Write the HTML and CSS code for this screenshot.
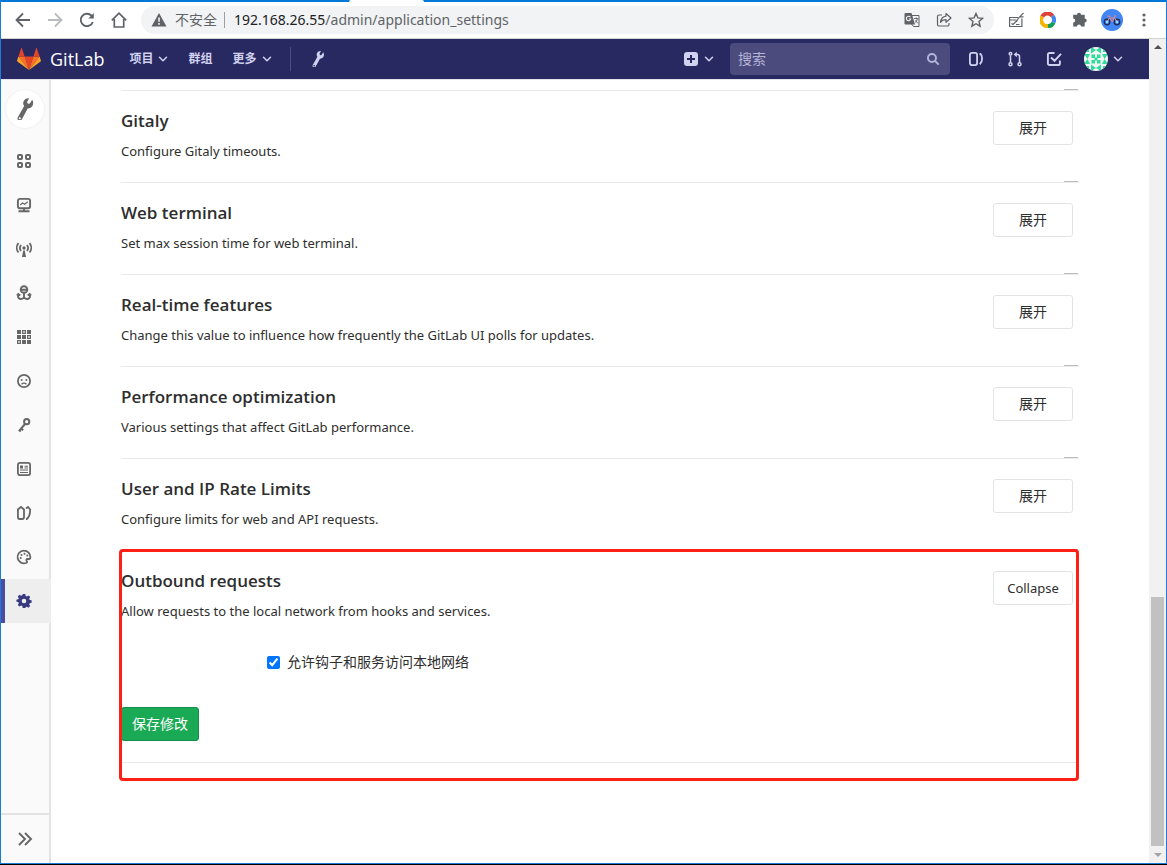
FILE: index.html
```html
<!DOCTYPE html>
<html lang="zh-CN">
<head>
<meta charset="utf-8">
<title>Settings · GitLab</title>
<link rel="stylesheet" href="styles.css">
</head>
<body>
<svg class="sprite" aria-hidden="true">
  <symbol id="chevron" viewBox="0 0 10 10"><path d="M1.500 3.200 5 6.700l3.500-3.500" fill="none" stroke="currentColor" stroke-width="1.500" stroke-linecap="round" stroke-linejoin="round"/></symbol>
  <symbol id="wrench" viewBox="0 0 16 16"><path transform="rotate(-13 8 8)" fill="currentColor" d="M14.600 2.600 12.300 4.900 10.900 4.700 10.600 3.300 12.700 1C10.700.3 8.700 1.100 7.900 2.900c-.4 1-.4 1.900 0 2.800L1.600 12.600a1.650 1.650 0 0 0 2.400 2.300L10 8.100c1.200.3 2.500.1 3.500-.8 1.400-1.300 1.700-3.100 1.100-4.700ZM2.800 14.500a.75.75 0 1 1 0-1.500.75.75 0 0 1 0 1.500Z"/></symbol>
</svg>
<div class="window">
  <div class="tabstrip"><div class="active-tab"></div></div>
  <div class="toolbar">
    <button class="tool" aria-label="后退"><svg viewBox="0 0 16 16" fill="none" stroke="currentColor" stroke-width="1.800"><path d="M15 8H2M8 1.500 1.500 8 8 14.500"/></svg></button>
    <button class="tool disabled" aria-label="前进"><svg viewBox="0 0 16 16" fill="none" stroke="currentColor" stroke-width="1.800"><path d="M1 8h13M8 1.500 14.500 8 8 14.500"/></svg></button>
    <button class="tool" aria-label="重新加载"><svg viewBox="0 0 16 16" fill="none" stroke="currentColor" stroke-width="1.900"><path d="M13.800 10A6.200 6.200 0 1 1 12.500 3.700L13.500 5"/><path d="M14.800 1v5.500H9.300Z" fill="currentColor" stroke="none"/></svg></button>
    <button class="tool" aria-label="主页"><svg viewBox="0 0 16 16" fill="none" stroke="currentColor" stroke-width="1.700"><path d="M.8 8.300 8 1.200l7.200 7.100M3.300 7v8h9.400V7"/></svg></button>
    <div class="omnibox">
      <svg class="warn" viewBox="0 0 16 16"><path fill="currentColor" d="M8 1 15.500 14.500H.5Z"/><path d="M8 5.500v4.300M8 11v1.800" stroke="#f1f3f4" stroke-width="1.600"/></svg>
      <span class="insecure">不安全</span>
      <span class="url"><b>192.168.26.55</b>/admin/application_settings</span>
      <button class="tool" aria-label="翻译"><svg viewBox="0 0 16 16"><path d="M7 3.500h8v11H9.500L7.500 12" fill="none" stroke="currentColor" stroke-width="1"/><path fill="currentColor" d="M1.500 1h6L11 12.500H1.500A1 1 0 0 1 .5 11.500V2a1 1 0 0 1 1-1Z"/><path d="M6.400 5.300A2.200 2.200 0 1 0 6.700 7H4.800" fill="none" stroke="#f1f3f4" stroke-width="1.100"/><path d="M10 6.500h4.300M12.300 5.500v1M13.500 6.800c-.4 1.700-1.300 2.900-2.600 3.700M11.500 8.300l2.300 3" fill="none" stroke="currentColor" stroke-width=".9"/></svg></button>
      <button class="tool" aria-label="分享"><svg viewBox="0 0 16 16" fill="none" stroke="currentColor" stroke-width="1.200" stroke-linejoin="round"><path d="M6 3H3a1.500 1.500 0 0 0-1.500 1.500v8A1.500 1.500 0 0 0 3 14h8.500a1.500 1.500 0 0 0 1.500-1.500V11"/><path d="M10 1.500 15 6l-5 4.300V7.700c-2.600 0-4.300.8-5.500 2.600.4-3.400 2.200-5.700 5.500-6.200Z"/></svg></button>
      <button class="tool" aria-label="收藏"><svg viewBox="0 0 16 16" fill="none" stroke="currentColor" stroke-width="1.400"><path d="m8 1.500 1.900 4.400 4.800.4L11 9.500l1.100 4.700L8 11.700l-4.100 2.500L5 9.500 1.300 6.300l4.800-.4Z"/></svg></button>
    </div>
    <div class="extensions">
      <button class="tool" aria-label="笔记"><svg viewBox="0 0 16 16" fill="none" stroke="currentColor" stroke-width="1.200"><path d="M10 5.500H1.600v9h12.300V6.500M1.500 8h7M3.500 11.500l1.500 1 3-3M8 12.500h3.500M15.500.8 10.500 6l-2.300 4M11.500 4.800h4"/></svg></button>
      <button class="tool" aria-label="浏览扩展"><svg viewBox="0 0 16 16" fill="none" stroke-width="4"><path d="M2.200 4.700A6 6 0 0 1 12.500 4" stroke="#db4437"/><path d="M12.500 4A6 6 0 0 1 13.500 10.500" stroke="#4285f4"/><path d="M13.500 10.500A6 6 0 0 1 7 14" stroke="#0f9d58"/><path d="M8 14A6 6 0 0 1 2.200 4.700" stroke="#f4b400"/></svg></button>
      <button class="tool" aria-label="扩展程序"><svg viewBox="0 0 16 16"><path fill="currentColor" d="M5 2.800a2 2 0 0 1 4 0h3.700v3.700a2 2 0 0 1 0 4v4H9a2 2 0 0 0-4 0H1.200v-3.900a2 2 0 0 0 0-4V2.800Z"/></svg></button>
      <button class="tool profile" aria-label="个人资料"><svg viewBox="0 0 22 22"><circle cx="11" cy="11" r="11" fill="#4285f4"/><g fill="none" stroke="#202a50" stroke-width="1.300"><circle cx="6" cy="13" r="2.800"/><circle cx="16" cy="13" r="2.800"/></g><path d="M6 13 8.500 9h5L16 13M8.500 9l3 4 2-5.500M13 7h2" fill="none" stroke="#e58a84" stroke-width="1"/><path d="M6.500 7.200h3" stroke="#e58a84" stroke-width="1.200"/><g fill="#9ed7ff"><circle cx="6" cy="13" r="1.200"/><circle cx="16" cy="13" r="1.200"/></g></svg></button>
      <button class="tool" aria-label="菜单"><svg viewBox="0 0 16 16" fill="currentColor"><circle cx="8" cy="3" r="1.600"/><circle cx="8" cy="8" r="1.600"/><circle cx="8" cy="13" r="1.600"/></svg></button>
    </div>
  </div>

  <div class="viewport">
    <div class="page">
      <header class="navbar">
        <a class="brand" href="#">
          <svg viewBox="0 0 24 22"><path fill="#e24329" d="m12 22 4.400-13.500H7.600Z"/><path fill="#fc6d26" d="M12 22 7.600 8.500H1.400ZM12 22l4.400-13.500h6.200Z"/><path fill="#fca326" d="M1.400 8.500.1 12.600c-.1.400 0 .8.300 1L12 22ZM22.600 8.500l1.300 4.100c.1.400 0 .8-.3 1L12 22Z"/><path fill="#e24329" d="M1.400 8.500h6.200L5 .4c-.1-.4-.7-.4-.9 0ZM22.600 8.500h-6.200L19 .4c.1-.4.7-.4.9 0Z"/></svg>
          <span>GitLab</span>
        </a>
        <nav class="menu">
          <a href="#">项目<svg class="chev"><use href="#chevron"/></svg></a>
          <a href="#">群组</a>
          <a href="#">更多<svg class="chev"><use href="#chevron"/></svg></a>
          <a class="admin" href="#" aria-label="管理"><svg class="ico"><use href="#wrench"/></svg></a>
        </nav>
        <a class="pair" href="#" aria-label="新建"><svg class="ico" viewBox="0 0 16 16"><path fill="currentColor" fill-rule="evenodd" d="M4 1h8a3 3 0 0 1 3 3v8a3 3 0 0 1-3 3H4a3 3 0 0 1-3-3V4a3 3 0 0 1 3-3Zm3 3v3H4v2h3v3h2V9h3V7H9V4Z"/></svg><svg class="chev"><use href="#chevron"/></svg></a>
        <form class="search">
          <input type="text" placeholder="搜索" aria-label="搜索">
          <svg viewBox="0 0 16 16" fill="none" stroke="currentColor" stroke-width="2.200"><circle cx="6.800" cy="6.800" r="4.600"/><path d="m10.200 10.200 4.300 4.300"/></svg>
        </form>
        <nav class="shortcuts">
          <a href="#" aria-label="议题"><svg class="ico" viewBox="0 0 16 16" fill="none" stroke="currentColor" stroke-width="1.800"><rect x="1.900" y="1.900" width="7.200" height="12.200" rx="2"/><path d="M11.500 3h1c1 .8 1.600 2 1.600 4.500s-.8 4.500-2.300 5.800"/></svg></a>
          <a href="#" aria-label="合并请求"><svg class="ico" viewBox="0 0 16 16" fill="none" stroke="currentColor" stroke-width="1.500"><circle cx="3.500" cy="2.800" r="1.300"/><circle cx="3.500" cy="13.300" r="1.500"/><circle cx="12.500" cy="13.300" r="1.500"/><path d="M3.500 4.500v7M12.500 11.500V5.500c0-1.300-.8-2-2-2H8"/><path d="M9.800.8v5.400L6.600 3.500Z" fill="currentColor" stroke="none"/></svg></a>
          <a href="#" aria-label="待办事项"><svg class="ico" viewBox="0 0 16 16" fill="none" stroke="currentColor" stroke-width="1.900"><path d="M8.500 2H3.500A1.600 1.600 0 0 0 1.900 3.600v8.800A1.600 1.600 0 0 0 3.500 14h8.800a1.600 1.600 0 0 0 1.600-1.600V9.500M5 6.500l3.500 3.300 6.500-7"/></svg></a>
        </nav>
        <a class="pair user" href="#" aria-label="用户"><svg class="avatar" viewBox="0 0 24 24"><defs><clipPath id="round"><circle cx="12" cy="12" r="12"/></clipPath></defs><g clip-path="url(#round)"><path fill="#f3f5f4" d="M0 0h24v24H0z"/><path fill="#2ddb9c" d="M7.500 7.500h3.500v3.500H7.500zM13 7.500h3.500v3.500H13zM7.500 13h3.500v3.500H7.500zM13 13h3.500v3.500H13zM10.500 10.500h3v3h-3zM7 0l5 3-5 3.500zM17 0l-5 3 5 3.500zM7 17.500l5 3.500-5 3zM17 17.500l-5 3.500 5 3zM0 7l3.500 5L6 7zM0 17l3.500-5L6 17zM24 7l-3.500 5L18 7zM24 17l-3.500-5L18 17zM2 2h3v3H2zM19 2h3v3h-3zM2 19h3v3H2zM19 19h3v3h-3z"/></g></svg><svg class="chev"><use href="#chevron"/></svg></a>
      </header>

      <div class="body">
        <aside class="sidebar">
          <a class="context" href="#" aria-label="管理区域"><svg viewBox="0 0 16 16"><use href="#wrench"/></svg></a>
          <nav class="side-nav">
            <a href="#" aria-label="概览"><svg viewBox="0 0 16 16" fill="none" stroke="currentColor" stroke-width="2"><rect x="2" y="2" width="4" height="4" rx="1"/><rect x="10" y="2" width="4" height="4" rx="1"/><rect x="2" y="10" width="4" height="4" rx="1"/><rect x="10" y="10" width="4" height="4" rx="1"/></svg></a>
            <a href="#" aria-label="监控"><svg viewBox="0 0 16 16" fill="none" stroke="currentColor" stroke-width="1.900"><rect x="1.900" y="1.900" width="12.200" height="9.400" rx="2"/><path d="M2.500 14.200h11M8 11v3"/><path d="m4.300 8 2.200-2 2.200 1.300 3-2.500" stroke-width="1.200"/></svg></a>
            <a href="#" aria-label="消息"><svg viewBox="0 0 16 16" fill="none" stroke="currentColor" stroke-width="1.800"><path d="M2.500 2.200c-2.300 2.700-2.300 6.600 0 9.300M13.500 2.200c2.300 2.700 2.300 6.600 0 9.300M5.100 4c-1.400 1.700-1.400 4.300 0 6M10.900 4c1.400 1.700 1.400 4.300 0 6"/><circle cx="8" cy="7" r="1.700" fill="currentColor" stroke="none"/><path d="M7.200 9.500h1.600L10 16H6Z" fill="currentColor" stroke="none"/></svg></a>
            <a href="#" aria-label="系统钩子"><svg viewBox="0 0 16 16" fill="none" stroke="currentColor" stroke-width="1.900"><circle cx="8" cy="4.500" r="3.300"/><path d="M5 4.700h6M8 8v5M2 9v2.300A2.800 2.800 0 0 0 5 14c1.500 0 2.600-.8 3-2 .4 1.200 1.500 2 3 2a2.800 2.800 0 0 0 3-2.700V9M1 10.700 2.300 9l2 1.500M15 10.700 13.700 9l-2 1.500"/></svg></a>
            <a href="#" aria-label="应用"><svg viewBox="0 0 16 16" fill="currentColor"><path fill-rule="evenodd" d="M1 1h4v4H1zM6 1h4v4H6zm1.200 1.200v1.600h1.600V2.200zM11 1h4v4h-4zM1 6h4v4H1zM6 6h4v4H6zM11 6h4v4h-4zm1.200 1.200v1.600h1.600V7.200zM1 11h4v4H1zm1.200 1.200v1.600h1.600v-1.600zM6 11h4v4H6zM11 11h4v4h-4z"/></svg></a>
            <a href="#" aria-label="滥用报告"><svg viewBox="0 0 16 16" fill="none" stroke="currentColor" stroke-width="1.800"><circle cx="8" cy="8" r="6.100"/><path d="M5.500 11.200c1.300-1.500 3.700-1.500 5 0" stroke-width="1.300"/><g fill="currentColor" stroke="none"><circle cx="5.600" cy="7" r="1"/><circle cx="10.400" cy="7" r="1"/></g></svg></a>
            <a href="#" aria-label="部署密钥"><svg viewBox="0 0 16 16" fill="none" stroke="currentColor" stroke-width="2"><circle cx="10.700" cy="4.700" r="2.600"/><path d="m9 7-6 7.200M5 11.300l2.200 2M2.800 12.800l2 1.800"/></svg></a>
            <a href="#" aria-label="许可证"><svg viewBox="0 0 16 16" fill="none" stroke="currentColor" stroke-width="1.800"><rect x="1.900" y="1.900" width="12.200" height="12.200" rx="2"/><path d="M8.500 5.200H12M8.500 7H12M4 9h8M4 11.500h8" stroke-width="1.100"/><path d="M4 4.500h3v3H4z" fill="currentColor" stroke="none"/></svg></a>
            <a href="#" aria-label="标签"><svg viewBox="0 0 16 16" fill="none" stroke="currentColor" stroke-width="1.800"><path d="M1.900 4.500 5 2l3 2.500V12c0 1.300-.6 2-1.800 2H3.700c-1.200 0-1.800-.7-1.800-2ZM10 3.500 12 2l2.200 2.500c0 4-.4 7-3.400 9.500H10"/></svg></a>
            <a href="#" aria-label="外观"><svg viewBox="0 0 16 16" fill="none" stroke="currentColor" stroke-width="1.800"><path d="M8 1.700a6.300 6.300 0 1 0 2.500 12c.8-.4.700-1.100.2-1.700-.8-.9-.3-2.100.9-2h1.600c.7 0 1.200-.6 1.200-1.700A6.400 6.400 0 0 0 8 1.700Z"/><g fill="currentColor" stroke="none"><circle cx="8.500" cy="4.800" r="1"/><circle cx="5.500" cy="6" r="1"/><circle cx="4.700" cy="9" r="1"/><circle cx="11.300" cy="6.500" r="1"/></g></svg></a>
            <a class="active" href="#" aria-label="设置"><svg viewBox="0 0 16 16" fill="currentColor"><path fill-rule="evenodd" d="M6.700 1h2.600l.4 1.900 1.200.5 1.700-1 1.600 1.700-1 1.700.5 1.100 1.900.4v2.500l-1.900.4-.5 1.200 1 1.700-1.700 1.600-1.600-1-1.200.5L9.300 15H6.700l-.4-1.900-1.200-.5-1.700 1-1.600-1.600 1-1.700-.5-1.200-1.900-.4V6.700l1.900-.4.5-1.100-1-1.700 1.700-1.700 1.600 1 1.200-.5ZM8 5.700a2.300 2.300 0 1 0 0 4.600 2.300 2.300 0 0 0 0-4.600Z"/></svg></a>
          </nav>
          <button class="expand" aria-label="展开侧边栏"><svg viewBox="0 0 16 16" fill="none" stroke="currentColor" stroke-width="1.900"><path d="m2 2 6 6-6 6M8 2l6 6-6 6"/></svg></button>
        </aside>

        <main class="content">
          <section class="setting"><div><h4>Gitaly</h4><p>Configure Gitaly timeouts.</p></div><button class="btn">展开</button></section>
          <section class="setting"><div><h4>Web terminal</h4><p>Set max session time for web terminal.</p></div><button class="btn">展开</button></section>
          <section class="setting"><div><h4>Real-time features</h4><p>Change this value to influence how frequently the GitLab UI polls for updates.</p></div><button class="btn">展开</button></section>
          <section class="setting"><div><h4>Performance optimization</h4><p>Various settings that affect GitLab performance.</p></div><button class="btn">展开</button></section>
          <section class="setting"><div><h4>User and IP Rate Limits</h4><p>Configure limits for web and API requests.</p></div><button class="btn">展开</button></section>
          <section class="setting open">
            <div><h4>Outbound requests</h4><p>Allow requests to the local network from hooks and services.</p></div><button class="btn toggle">Collapse</button>
            <form class="settings-form">
              <div class="check"><input type="checkbox" id="hooks" checked><label for="hooks">允许钩子和服务访问本地网络</label></div>
              <button class="btn save" type="button">保存修改</button>
            </form>
          </section>
        </main>
      </div>
    </div>
    <div class="scrollbar"><span class="arrow up"></span><span class="thumb"></span><span class="arrow down"></span></div>
  </div>
</div>
</body>
</html>
```
FILE: styles.css
```css
* { box-sizing: border-box; }
body {
  margin: 0;
  background: #000;
  color: #2e2e2e;
  font: 14px/20px "Open Sans", "Noto Sans CJK SC", sans-serif;
}
a { color: inherit; text-decoration: none; }
button { font: inherit; color: inherit; cursor: pointer; }
svg { display: block; flex: none; }
.sprite { position: absolute; width: 0; height: 0; }

.window {
  display: flex;
  flex-direction: column;
  height: calc(100vh - 1px);
  border: 1px solid #1a7fd4;
  border-top: 0;
  background: #fff;
}
.tabstrip { height: 2px; background: #0078d7; flex: none; }
.active-tab { width: 75px; height: 2px; margin-left: 348px; background: #fff; border-radius: 2px 2px 0 0; }

.toolbar {
  display: flex;
  align-items: center;
  gap: 16px;
  height: 37px;
  flex: none;
  padding: 0 14px;
  border-bottom: 1px solid #d0d2d4;
  color: #5f6368;
}
.tool { display: block; padding: 0; border: 0; background: none; }
.tool svg { width: 16px; height: 16px; }
.disabled { color: #b9bbbe; }
.omnibox {
  display: flex;
  align-items: center;
  flex: 1;
  gap: 16px;
  height: 28px;
  margin-left: -2px;
  padding: 0 10px;
  border-radius: 14px;
  background: #f1f3f4;
}
.warn { width: 16px; height: 16px; }
.insecure { margin-left: -8px; padding-right: 7px; border-right: 1px solid #9aa0a6; line-height: 16px; }
.url { flex: 1; margin-left: -7px; font-family: "Noto Sans", sans-serif; white-space: nowrap; }
.url b { color: #202124; font-weight: 400; }
.extensions { display: flex; align-items: center; gap: 16px; margin-left: -2px; }
.profile { margin: 0 -3px; }
.profile svg { width: 22px; height: 22px; }

.viewport { display: flex; flex: 1; min-height: 0; }
.page { display: flex; flex: 1; flex-direction: column; min-width: 0; }
.navbar {
  display: flex;
  align-items: center;
  height: 41px;
  flex: none;
  padding: 0 26px 0 16px;
  border-bottom: 1px solid #e3e3ee;
  background: #292961;
  color: #d1d1f0;
}
.brand { display: flex; align-items: center; gap: 9px; color: #fff; font-size: 18px; }
.brand svg { width: 24px; height: 22px; }
.menu { display: flex; align-items: center; gap: 20px; flex: 1; margin-left: 25px; font-size: 12px; font-weight: 700; }
.menu a { display: flex; align-items: center; gap: 5px; }
.chev { width: 10px; height: 10px; }
.ico { width: 16px; height: 16px; }
.menu .admin { height: 24px; margin-left: -2px; padding-left: 19px; border-left: 1px solid #4d4d80; }
.pair { display: flex; align-items: center; gap: 5px; }
.search {
  display: flex;
  align-items: center;
  width: 220px;
  height: 32px;
  margin: 0 18px 0 16px;
  padding: 0 10px 0 8px;
  border-radius: 4px;
  background: #4b4b7d;
  color: #b4b4d9;
}
.search input { flex: 1; min-width: 0; padding: 0; border: 0; outline: 0; background: none; color: inherit; font: inherit; }
.search input::placeholder { color: #b4b4d9; opacity: 1; }
.search svg { width: 14px; height: 14px; }
.shortcuts { display: flex; gap: 23px; }
.user { margin-left: 22px; }
.avatar { width: 24px; height: 24px; }

.body { display: flex; flex: 1; min-height: 0; }
.sidebar {
  display: flex;
  flex-direction: column;
  width: 50px;
  flex: none;
  border-right: 2px solid #e3e3e3;
  background: #fafafa;
  color: #666;
}
.context {
  display: flex;
  align-items: center;
  justify-content: center;
  width: 38px;
  height: 38px;
  flex: none;
  margin: 10px 5px 11px;
  border-radius: 50%;
  background: #fff;
  box-shadow: 0 0 1px 1px #f2f2f2;
}
.context svg { width: 22px; height: 22px; }
.side-nav { flex: 1; }
.side-nav a { display: flex; align-items: center; justify-content: center; height: 44px; margin-right: -2px; }
.side-nav svg { width: 16px; height: 16px; margin-right: 4px; }
.side-nav .active { border-left: 4px solid #4b4ba3; background: #eeeeef; color: #393982; }
.side-nav .active svg { margin-right: 8px; }
.expand { display: flex; align-items: center; justify-content: center; height: 50px; padding: 0; border: 0; border-top: 2px solid #e3e3e3; background: none; }
.expand svg { width: 16px; height: 16px; color: #666; }

.content { flex: 1; min-width: 0; padding: 10px 70px 0; overflow: hidden; }
.setting {
  position: relative;
  display: flex;
  flex-wrap: wrap;
  align-items: flex-start;
  justify-content: space-between;
  min-height: 92px;
  padding: 20px 6px 0 0;
  border-top: 1px solid #eaeaea;
}
.setting::before {
  content: "";
  position: absolute;
  top: -2px;
  right: 1px;
  width: 14px;
  height: 1px;
  background: #bdbdbd;
}
h4 { margin: 0 0 10px; font-size: 17px; font-weight: 600; line-height: 20px; }
p { margin: 0; font-family: "Noto Sans", sans-serif; font-size: 13px; }
.btn { min-width: 80px; height: 34px; padding: 0 10px; border: 1px solid #e3e3e3; border-radius: 3px; background: #fff; }
.toggle { font-family: "Noto Sans", sans-serif; font-size: 13px; }
.open { border-bottom: 1px solid #eaeaea; }
.open::after {
  content: "";
  position: absolute;
  inset: -2px 0 -19px -2px;
  border: 3px solid #ff2015;
  border-radius: 4px;
  pointer-events: none;
}
.settings-form { flex-basis: 100%; padding: 31px 0 21px; }
.check { display: flex; align-items: center; gap: 7px; margin: 0 0 35px 146px; }
.check input { width: 13px; height: 13px; margin: 0; }
.save { min-width: 78px; border-color: #168f48; background: #1aaa55; color: #fff; }

.scrollbar { display: flex; flex-direction: column; align-items: center; width: 17px; flex: none; padding: 6px 0; background: #f1f1f1; }
.thumb { width: 13px; height: 249px; margin: auto 0 7px; background: #c1c1c1; }
.arrow { border: 4px solid transparent; }
.up { border-top: 0; border-bottom-color: #505050; }
.down { border-bottom: 0; border-top-color: #a3a3a3; }
```
